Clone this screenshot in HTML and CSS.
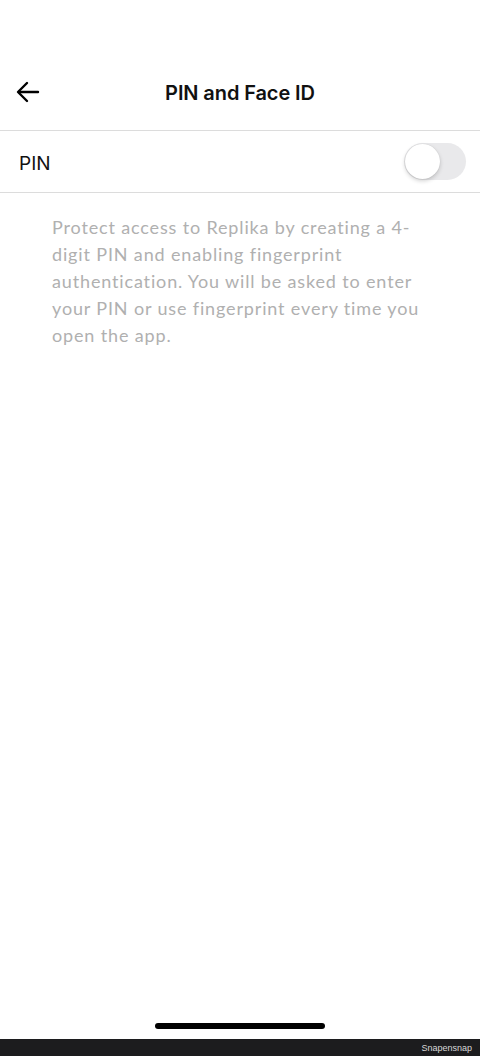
FILE: index.html
```html
<!DOCTYPE html>
<html lang="en">
<head>
    <meta charset="UTF-8">
    <meta name="viewport" content="width=device-width, initial-scale=1.0">
    <title>PIN and Face ID</title>
    <link rel="stylesheet" href="styles.css">
</head>
<body>

    <div class="screen">
        <div class="status-space"></div>

        <header class="top-bar">
            <button class="back-btn" aria-label="Back">
                <svg width="24" height="22" viewBox="0 0 24 22" fill="none" stroke="#000" stroke-width="2.4" stroke-linecap="round" stroke-linejoin="round">
                    <path d="M22 11H3"/>
                    <path d="M11 2L2 11l9 9"/>
                </svg>
            </button>
            <h1 class="title">PIN and Face ID</h1>
        </header>

        <div class="setting-row">
            <span class="setting-label">PIN</span>
            <div class="toggle"><div class="knob"></div></div>
        </div>

        <p class="hint">
            Protect access to Replika by creating a 4-digit PIN and enabling fingerprint authentication. You will be asked to enter your PIN or use fingerprint every time you open the app.
        </p>

        <div class="spacer"></div>

        <div class="home-area"><div class="home-indicator"></div></div>
    </div>

    <footer class="watermark">Snapensnap</footer>

</body>
</html>
```

FILE: styles.css
```css
body, html {
    margin: 0;
    padding: 0;
    width: 100%;
    height: 100%;
    background-color: #fff;
    font-family: Lato, 'Noto Sans', sans-serif;
    overflow: hidden;
}

body {
    display: flex;
    flex-direction: column;
}

.screen {
    flex: 1;
    display: flex;
    flex-direction: column;
}

.status-space { height: 62px; }

.top-bar {
    height: 69px;
    display: flex;
    align-items: center;
    justify-content: center;
    position: relative;
    border-bottom: 1px solid #dcdcdc;
    padding-bottom: 7px;
    box-sizing: border-box;
}

.back-btn {
    position: absolute;
    left: 16px;
    top: 19px;
    padding: 0;
    border: none;
    background: none;
    width: 24px;
    height: 22px;
}

.title {
    margin: 0;
    font-size: 20px;
    color: #111;
    font-family: Inter, 'Noto Sans', sans-serif;
    font-weight: 600;
    letter-spacing: -0.1px;
}

.setting-row {
    height: 61px;
    display: flex;
    align-items: center;
    justify-content: space-between;
    padding: 0 14px 0 19px;
    border-bottom: 1px solid #dcdcdc;
}

.setting-label {
    font-size: 19px;
    color: #111;
    font-family: Inter, 'Noto Sans', sans-serif;
    padding-top: 4px;
}

.toggle {
    width: 62px;
    height: 37px;
    border-radius: 19px;
    background-color: #e9e9eb;
    position: relative;
}

.knob {
    position: absolute;
    left: 1px;
    top: 1px;
    width: 35px;
    height: 35px;
    border-radius: 50%;
    background-color: #fff;
    box-shadow: 0 2px 4px rgba(0,0,0,0.18), 0 0 1px rgba(0,0,0,0.15);
}

.hint {
    margin: 21px 40px 0 52px;
    font-size: 18px;
    line-height: 27px;
    color: #b0b0b0;
    letter-spacing: 0.85px;
}

.spacer { flex: 1; }

.home-area {
    display: flex;
    justify-content: center;
    padding-bottom: 10px;
}

.home-indicator {
    width: 170px;
    height: 6px;
    border-radius: 3px;
    background-color: #000;
}

.watermark {
    height: 17px;
    background-color: #1c1c1e;
    color: #d8d8d8;
    font-size: 9px;
    font-family: 'Liberation Sans', sans-serif;
    text-align: right;
    padding-right: 8px;
    line-height: 19px;
}
```
